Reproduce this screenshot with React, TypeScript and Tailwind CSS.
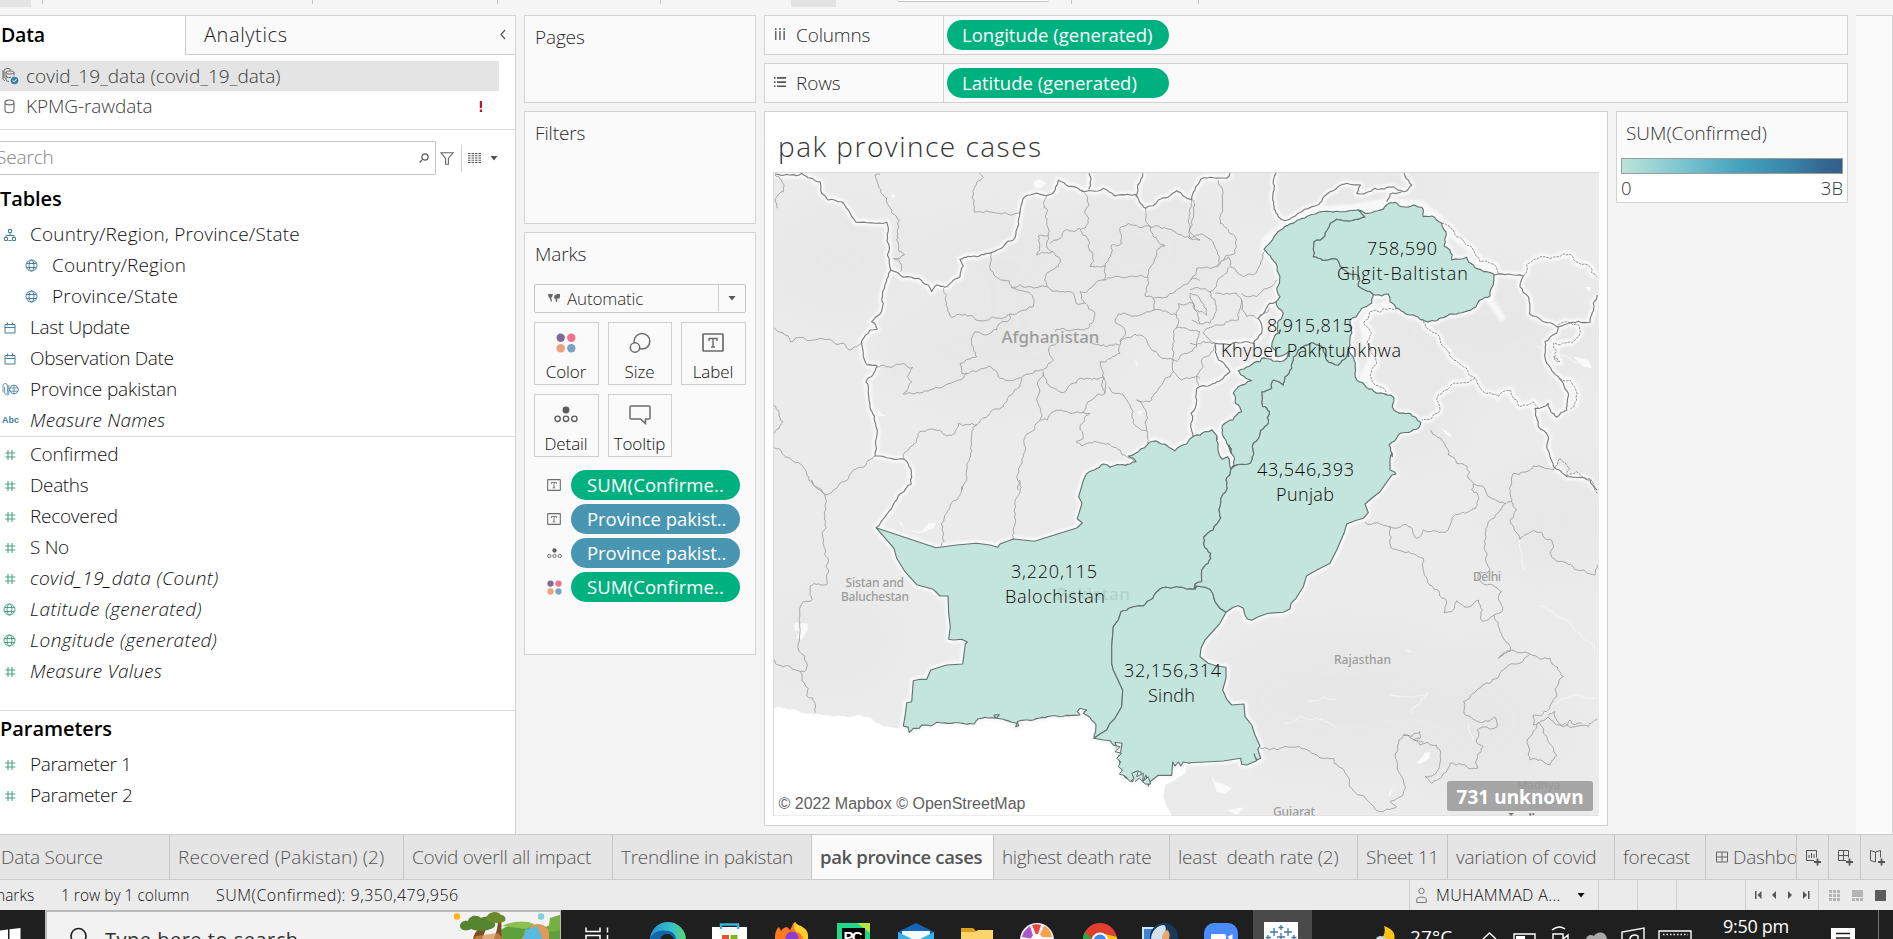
import React from "react";

/* ------------------------------------------------------------------ */
/* Map geometry                                                        */
/* ------------------------------------------------------------------ */

type Pt = [number, number];
type Origin = [number, number];

// Survey sheets: each list of points is stored in thirds of a pixel, relative to its sheet.
const A: Origin = [770, 160];
const B: Origin = [1190, 160];
const C: Origin = [770, 480];
const D: Origin = [1190, 430];

const seg = (o: Origin, s: string): Pt[] =>
  s.trim().split(/\s+/).map((p) => {
    const [x, y] = p.split(",").map(Number);
    return [o[0] + x / 3, o[1] + y / 3] as Pt;
  });

const rough = (pts: Pt[], amp = 0.16, min = 4): Pt[] => {
  let seed = Math.round(pts[0][0] * 13 + pts[0][1] * 7 + pts.length);
  const rnd = () => {
    seed = (seed * 1103515245 + 12345) & 0x7fffffff;
    return seed / 0x7fffffff - 0.5;
  };
  const out: Pt[] = [pts[0]];
  const split = (a: Pt, b: Pt) => {
    const dx = b[0] - a[0];
    const dy = b[1] - a[1];
    const len = Math.hypot(dx, dy);
    if (len < min) {
      out.push(b);
      return;
    }
    const k = rnd() * amp * 2 * Math.min(1, 14 / len);
    const m: Pt = [(a[0] + b[0]) / 2 - dy * k, (a[1] + b[1]) / 2 + dx * k];
    split(a, m);
    split(m, b);
  };
  for (let i = 1; i < pts.length; i++) split(pts[i - 1], pts[i]);
  return out;
};

const path = (pts: Pt[], close = false) =>
  "M" + pts.map((p) => p[0].toFixed(1) + " " + p[1].toFixed(1)).join("L") + (close ? "Z" : "");
const rev = (p: Pt[]) => [...p].reverse();

const balNorth = [
  ...seg(C, "318,143 498,203 560,195 619,190 660,195 683,202 690,192 730,177 793,184 920,144 937,129 922,116 936,70 926,50 940,2"),
  ...rough([...seg(A, "945,950 973,930 1000,912 1020,922 1080,912 1098,905 1075,888 1105,875 1138,847 1185,852 1215,872 1250,852 1272,828 1290,826"), ...seg(B, "65,810 82,832")], 0.14),
  ...rough(seg(D, "80,22 84,60 97,88 113,80 122,118")),
];
const balPunjab = rough(seg(D, "122,118 108,150 112,175 95,200 90,230 92,265 70,300 42,320 42,345 62,370 55,400 35,420 35,455 15,462 15,478"));
const balSindh = [
  ...rough([...seg(D, "15,478"), ...seg(C, "1275,315 1270,328 1235,322 1170,327 1120,378 1053,395")], 0.12),
  ...seg(C, "1053,395 1045,420 1030,440 1025,500 1025,550 1030,570 1058,630 1055,680 1035,715 1020,730 1010,750 990,762 972,775"),
];
const balCoast = rough(seg(C, "972,775 978,735 960,712 940,700 950,690 930,685 922,695 930,705 870,710 810,714 790,720 742,725 746,737 737,740 740,730 725,727 700,718 680,715 672,706 688,704 680,715 645,712 625,716 612,732 560,728 500,727 482,738 455,735 448,745 430,745 418,757 415,742 400,738"), 0.08);
const balWest = seg(C, "400,738 405,710 410,668 425,665 430,602 450,598 470,598 482,570 530,555 578,552 586,492 592,486 575,478 550,480 536,478 541,440 536,400 534,348 510,348 490,328 440,314 405,275 380,235 372,205 318,143");
const sindhPunjab = seg(D, "15,478 20,468 45,472 60,478 68,490 75,515 90,535 108,547");
const sindhEast = seg(D, "108,547 90,580 45,630 33,655 30,680 55,700 80,708 108,712 108,745 98,780 110,808 125,825 162,822 165,860 185,885 195,915 210,948 203,958 212,985 200,990 192,972 200,992 170,1005 155,1003 152,985 100,993 0,998");
const sindhCoast = seg(C, "1258,850 1240,846 1232,858 1225,846 1215,858 1208,846 1205,886 1165,886 1140,905 1135,918 1128,885 1120,905 1112,875 1095,875 1088,905 1065,892 1056,870 1050,850 1045,830 1052,815 1056,790 1035,787 1040,800 1030,795 1020,782 1000,780 972,775");
const kpPunjab = rough([
  ...seg(B, "480,555 470,590 445,615 410,600 400,565 370,548 325,570 310,590 305,625 285,650 280,675 250,660 245,685 215,695 218,740 238,755 235,790 213,810"),
  ...seg(D, "187,50 180,100 150,103 122,118"),
]);
const kpNorth = rough(seg(B, "222,268 272,210 330,178 385,157 440,154 505,150"), 0.1);
const gbNorth = rough(seg(B, "505,150 525,160 545,158 565,152 590,135 615,127 640,140 670,135 695,142 700,170 725,168 755,190 768,215 762,258 780,270 785,300 830,292 850,315 880,335 912,343 910,375 900,408 870,420 850,445 780,462 740,482 690,478 660,465 640,455 600,425 595,402 575,408 550,403"));
const gbKp = rough(seg(B, "550,403 525,390 505,378 505,345 470,335 450,318 440,297 412,300 385,295 370,290 372,245 405,228 412,210 440,178 500,178 525,172 505,150"));
const kpEast = rough(seg(B, "550,403 545,430 515,445 500,470 480,480 485,520 480,555"));
const kpWest = rough([
  ...seg(D, "122,118 132,105 118,45"),
  ...seg(B, "125,880 110,850 97,797 155,755 130,700 145,680 185,662 145,632 210,605 215,595 270,605 290,595 295,575 262,590 245,560 265,520 262,490 280,460 258,425 270,410 260,385 270,350 258,310 222,268"),
]);
const punjabEast = [
  ...rough(seg(B, "480,555 492,600 495,640 500,660 560,700 612,715 612,750 660,760 692,787 685,805 625,825 597,855 607,890")),
  ...seg(D, "605,70 600,85 600,120 612,125 618,132 605,136 595,150 570,185 545,205 525,222 535,248 520,265 495,272 470,282 462,310 440,360 420,400 385,418 350,437 340,470 318,505 303,520 300,537 280,547 235,550 205,560 185,571 172,567 165,555 160,535 145,527 130,532 108,547"),
];

const provinces = [
  [...balNorth, ...balPunjab, ...balSindh, ...balCoast, ...balWest],
  [...rev(balSindh), ...sindhPunjab, ...sindhEast, ...sindhCoast],
  [...punjabEast, ...rev(sindhPunjab), ...rev(balPunjab), ...rev(kpPunjab)],
  [...kpNorth, ...rev(gbKp), ...kpEast, ...kpPunjab, ...kpWest],
  [...gbNorth, ...gbKp],
].map((p) => path(p, true));

const deltaLoops = path(seg(C, "1030,795 1050,800 1035,815 1055,820 1040,835 1052,845 1045,860 1058,870 1048,882 1066,888 1080,905 1092,895 1085,880 1105,872 1100,890 1120,880 1118,905 1135,890 1142,912 1125,912 1108,895 1095,905"));

const countryLines: Pt[][] = [
  seg(A, "15,42 60,45 95,40 150,65 155,100 175,120 215,125 235,150 258,187 350,187 358,260 352,285 362,330"),
  seg(A, "362,330 400,352 445,355 475,375 485,395 500,375 525,382 570,350 580,318 570,298 620,290 680,270 730,240 742,205 750,155 758,118 790,102 845,102 865,60 930,90 1000,85 1035,108 1095,103 1127,145 1165,120 1220,92 1265,120 1275,90 1292,58 1370,55 1380,40"),
  seg(A, "957,40 957,88"),
  seg(A, "1118,40 1103,75 1100,110"),
  [...seg(A, "362,330 345,375 340,430 330,462 305,485 322,508 300,510 275,543 280,580 292,615 322,618 288,665 300,740 318,800 315,888 408,902 422,925 425,950"), ...seg(C, "424,12 318,143")],
  [...seg(D, "82,30 80,22"), ...seg(B, "65,810 30,826 8,830 2,800 3,760 20,720 20,685 75,670 120,635 85,600 75,550 120,555 190,550 215,520 205,475 240,430 258,425")],
  seg(B, "258,38 248,120 265,170 285,182 310,170 335,155 375,138 395,125 420,95 470,70 512,75 500,100 555,85 610,80 640,95 665,75 655,60 642,40"),
  seg(B, "635,95 600,102 590,125"),
  seg(B, "912,345 1000,348 990,380 1015,410 1018,460 1060,485 1100,500 1130,492 1200,487 1210,430 1222,405"),
  [...seg(B, "1105,500 1100,520 1065,545 1070,610 1105,650 1120,670 1135,700 1130,750 1100,772 1082,755 1075,730 1035,745 1045,800 1075,830"), ...seg(D, "1070,50 1080,80 1090,110 1130,140 1200,150 1222,180")],
].map((l) => rough(l, 0.14));

const softHalo: Pt[][] = [
  seg(B, "600,430 540,450 520,490 530,560 545,600 520,650 560,690"),
  seg(B, "755,190 800,235 850,275 870,310 915,330"),
  seg(B, "222,268 225,240 272,205 330,170 385,150 500,142 590,125 695,132 755,180"),
  seg(B, "940,480 900,420 915,350"),
];

const dashedLines: Pt[][] = [
  seg(B, "755,190 800,230 850,270 870,305 920,325 928,345"),
  seg(B, "1000,348 1010,315 1060,290 1140,283 1200,320 1220,350"),
  seg(B, "1105,495 1165,495 1170,520 1145,548 1090,550 1095,600 1110,605 1090,590"),
  seg(B, "1110,655 1140,660 1160,720 1140,750"),
  seg(B, "640,455 600,445 540,455 520,490 545,520 530,550 560,610 545,660 585,690 588,715"),
  seg(B, "690,478 750,540 770,570 790,600 820,620 855,655 890,700 925,710 960,690 990,740 1030,725 1045,745"),
  seg(B, "855,655 800,670 745,705 750,750 725,775 695,780"),
  seg(D, "1090,120 1110,85 1140,115 1130,140 1160,125 1200,145 1222,190"),
].map((l) => rough(l, 0.2));

const districtLines: Pt[][] = [
  seg(A, "15,45 35,60 40,95 15,120 22,145"),
  seg(A, "330,42 315,45 325,75 388,180 388,275 403,285 390,295 370,295 395,315 392,335"),
  seg(A, "628,40 640,52 613,85 613,157 752,157"),
  seg(A, "10,500 60,545 100,532 220,550 240,570 275,543"),
  seg(A, "10,735 38,785 10,822"),
  seg(A, "10,860 110,940 165,1003"),
  [...seg(A, "315,888 250,930 220,965 190,990"), ...seg(C, "165,43")],
  [...seg(C, "125,0 163,43 162,200 175,240 172,312 120,318 127,358 100,365 88,485 108,545 108,570 90,575 10,538")],
  seg(C, "90,575 115,625 110,645 136,675 136,698"),
  seg(A, "668,275 660,315 672,345 718,362 725,383 780,400 790,440 770,450 720,462 650,480 610,470 545,472 530,430 520,385"),
  seg(A, "725,383 830,380 910,400 918,430 945,428 975,460 955,505 858,508 856,515"),
  seg(A, "830,380 830,340 865,320 870,295 848,275 800,285 805,228 835,225 830,260 848,275"),
  seg(A, "835,225 833,150 820,130 828,105"),
  seg(A, "935,88 952,110 945,160 955,190 930,210 955,240 968,280 960,320 1005,318"),
  seg(A, "930,205 880,215 840,250"),
  seg(A, "1127,145 1140,200 1075,190 1050,205 1055,250 1025,255 1005,318 1000,360 930,395 945,430"),
  seg(A, "1140,200 1185,258 1160,280 1135,330 1130,380 1125,408"),
  seg(A, "1000,360 1070,352 1133,352"),
  seg(A, "1140,200 1215,215 1290,240"),
  seg(A, "1272,120 1258,210 1290,240"),
  seg(A, "1125,408 1150,415 1200,400 1265,355 1290,362"),
  seg(A, "1150,415 1152,450 1110,465 1045,462 1038,490 1065,510 1050,555 1000,555 960,548"),
  seg(A, "1152,450 1220,465 1218,505 1210,600 1170,590 1140,560 1110,525 1050,545"),
  seg(A, "1220,465 1225,430 1270,430 1290,490"),
  seg(A, "1218,505 1290,515 1280,560 1220,605 1210,600"),
  seg(A, "720,462 718,480 690,490 680,510 660,520 615,515 605,545 620,590 570,610 575,640 590,640"),
  seg(A, "590,640 660,618 690,655 730,662 820,630 850,600 835,570 860,550"),
  seg(A, "590,640 565,660 520,680 430,702 400,702 425,665 412,650 428,622 322,622"),
  seg(A, "820,635 805,680 810,780 765,830 755,900 745,990"),
  seg(C, "748,0 730,177"),
  seg(A, "755,655 750,680 725,705 700,740 620,795 565,790 555,820 530,828 500,810 445,820 430,855 402,880 402,898"),
  [...seg(A, "620,795 603,840 590,930 575,990"), ...seg(C, "575,20 560,60 530,100 515,130 512,200")],
  seg(A, "820,640 830,670 880,698 930,655 1000,650 1005,700 965,720 935,758 850,755 832,780 812,782"),
  seg(A, "1005,700 1000,690 990,605 1050,580 1050,558"),
  seg(A, "1015,682 1060,705 1090,755 1100,800 1130,812"),
  seg(A, "935,758 960,760 930,800 940,830 918,845 935,858 1000,850 1050,870 1095,905"),
  seg(A, "1100,720 1130,760 1130,812 1130,850"),
  seg(A, "1100,720 1140,725 1170,680 1210,635 1210,600"),
  seg(A, "1210,635 1235,660 1290,655"),
  seg(B, "85,60 98,120 90,190 140,240 135,280 100,300"),
  seg(B, "8,118 0,160 5,235 50,230 80,270 80,320 20,325 0,360"),
  seg(B, "80,320 115,290 120,320 160,350 190,345 215,300 225,272"),
  seg(B, "115,322 80,370 60,395 0,390"),
  seg(B, "60,395 75,420 75,460 60,490 5,480"),
  seg(B, "75,400 110,400 140,400 155,420 145,480 75,495 40,520 75,550"),
  seg(B, "155,400 200,410 250,375 262,360"),
  seg(B, "155,420 170,470 205,475 240,445"),
  seg(B, "0,400 40,430 50,465 20,450 0,400"),
  seg(B, "75,555 35,600 40,620 20,650 25,680"),
  seg(B, "0,550 40,545 75,550"),
  seg(D, "720,0 752,25 775,75 800,100 830,108 835,145 880,170 895,200 930,218 965,215 960,190 970,130 1030,108 1090,120"),
  seg(D, "945,220 895,275 888,320 900,420 890,430 870,425 862,445 890,465 935,485 938,540 912,555 875,572 865,510 840,530 800,512 785,545 762,548 770,515"),
  seg(D, "770,515 712,450 700,385 640,365 605,355 600,290 525,277"),
  seg(D, "600,290 650,285 680,325 700,300 775,300 790,260 825,250 862,225 862,190 845,180 850,160"),
  seg(D, "965,215 980,240 960,270 990,328 1030,302 1090,345 1080,370 1150,410 1215,435 1222,405"),
  seg(D, "910,555 925,590 955,640 960,665 925,685 955,665 1020,672"),
  seg(D, "1020,672 940,720 850,790 820,815 822,850 850,868 900,872 915,860 922,890 862,900 858,930 880,950 862,985 862,1015 780,1000 760,1030 725,1060 705,1040 740,1025 750,960 740,945 690,945 640,915 620,990 640,1050 640,1090 600,1115 620,1130 575,1145"),
  seg(D, "575,1145 530,1110 480,1070 465,1030 430,985 380,975 320,950 210,955"),
  seg(D, "640,915 665,920 690,905 690,925 670,930 700,935"),
  seg(D, "1020,672 1080,685 1120,740 1100,800 1075,840 1030,855 1030,885 1045,878 1012,930 1020,990 1080,1005 1100,975 1070,920 1045,878 1075,860 1100,885 1150,890 1195,890 1222,868"),
  seg(D, "1075,855 1095,845 1100,870 1120,890 1140,870 1155,885 1175,880"),
].map((l) => rough(l, 0.2, 3));

const ocean = path([
  ...rough(seg(C, "0,685 60,688 120,700 200,708 260,705 300,712 360,742 385,747 400,738"), 0.15),
  ...seg(C, "460,700 700,680 980,700 1100,780 1205,846 1250,856 1245,880 1205,905 1185,915 1180,950 1190,980 1210,1012 0,1012"),
], true);

const lakes = [
  path(seg(A, "790,65 805,58 830,70 815,82 795,85"), true),
  path(seg(A, "358,108 375,100 372,115"), true),
  path(seg(A, "322,742 332,760 348,768 325,768"), true),
  path(seg(A, "1095,598 1103,610 1100,622"), true),
  path(seg(A, "1102,755 1118,750 1110,765"), true),
  path(seg(C, "75,428 115,432 112,450 95,480 78,475 88,455 72,450"), true),
  path(seg(C, "385,122 398,130 400,150 450,160 490,145 498,128 475,130 455,155 405,150"), true),
  path(seg(D, "62,1030 75,1055 95,1060 125,1075 105,1092 80,1085"), true),
  path(seg(D, "680,1000 705,970 720,965 718,985 690,1002"), true),
  path(seg(D, "110,1140 165,1132 140,1155"), true),
  path(seg(D, "640,658 660,662 665,670"), true),
  path(seg(D, "595,1095 610,1072 600,1098"), true),
  path(seg(B, "1150,590 1195,600 1205,625 1180,620"), true),
  path(seg(B, "1185,380 1205,382 1195,395"), true),
  path(seg(B, "755,805 780,820 785,832 765,822"), true),
];

const rivers = [
  path(rough(seg(D, "1050,528 1090,545 1140,580 1180,625 1205,640 1215,660"))),
  path(rough(seg(D, "990,330 998,370 1003,420"))),
  path(rough(seg(D, "285,880 330,858 380,865 440,895"))),
  path(rough(seg(D, "355,812 400,800 440,808"))),
  path(rough(seg(D, "600,795 635,800 690,795 715,790 690,820 665,850"))),
  path(rough(seg(D, "1222,800 1150,795 1110,810 1090,830 1060,850"))),
  path(rough(seg(D, "835,880 835,900 850,930"))),
  path(rough(seg(B, "1040,560 1080,585 1130,590 1190,620"))),
];

const shades: [number, number, number, number][] = [
  [840, 260, 70, 50], [1010, 260, 90, 45], [1140, 250, 80, 60], [1000, 350, 120, 50], [1330, 180, 110, 30],
  [1480, 330, 120, 60], [1400, 420, 60, 40], [1550, 520, 60, 50], [1340, 700, 130, 70], [1480, 720, 80, 70], [830, 640, 60, 40],
];

interface MapTextProps { x: number; y: number; w: number; size: number; cls: string; children: string }
const MapText = ({ x, y, w, size, cls, children }: MapTextProps) => (
  <text x={x} y={y} textLength={w} fontSize={size} className={cls}>{children}</text>
);

const PLACE = "font-['Noto_Sans',sans-serif] font-medium fill-[#9c9c9c]";
const MARK = "font-['Open_Sans',sans-serif] font-[350] fill-[#0a0a0a]";

const ProvinceMap = () => (
  <svg viewBox="773 172 826 644" width="826" height="644" className="block bg-[#ebebeb]">
    <defs>
      <filter id="soft" x="-30%" y="-30%" width="160%" height="160%"><feGaussianBlur stdDeviation="18" /></filter>
      <filter id="glow" x="-10%" y="-10%" width="120%" height="120%"><feGaussianBlur stdDeviation="0.9" /></filter>
    </defs>
    <g filter="url(#soft)" fill="#dfdfdf" opacity="0.28">
      {shades.map(([cx, cy, rx, ry]) => <ellipse key={cx + "-" + cy} cx={cx} cy={cy} rx={rx} ry={ry} />)}
    </g>
    <path d={ocean} fill="#fff" />
    <g fill="#fafafa">{lakes.map((d) => <path key={d} d={d} />)}</g>
    <g fill="none" stroke="#f7f7f7" strokeWidth="1">{rivers.map((d) => <path key={d} d={d} />)}</g>
    <g fill="none" stroke="#f8f8f8" strokeWidth="7" strokeLinejoin="round" filter="url(#glow)">
      {[...countryLines, ...softHalo, ...dashedLines.slice(0, 7)].map((l, i) => <path key={i} d={path(l)} />)}
      {provinces.map((d) => <path key={d} d={d} strokeWidth="7" />)}
    </g>
    <g fill="none" stroke="#969696" strokeWidth="0.8" strokeLinejoin="round">
      {districtLines.map((l, i) => <path key={i} d={path(l)} />)}
    </g>
    <g fill="none" stroke="#7d7d7d" strokeWidth="1.15" strokeLinejoin="round">
      {countryLines.map((l, i) => <path key={i} d={path(l)} />)}
    </g>
    <g fill="none" stroke="#858585" strokeWidth="0.9" strokeDasharray="2.5 1">
      {dashedLines.map((l, i) => <path key={i} d={path(l)} />)}
    </g>
    <g fill="#c3e5db" stroke="#64736f" strokeWidth="1.15" strokeLinejoin="round">
      {provinces.map((d) => <path key={d} d={d} />)}
      <path d={deltaLoops} strokeWidth="1" />
    </g>

    <MapText x={1001.5} y={343} w={98} size={17} cls={PLACE}>Afghanistan</MapText>
    <MapText x={845.5} y={586.5} w={58.5} size={12} cls={PLACE}>Sistan and</MapText>
    <MapText x={841} y={601} w={68} size={12} cls={PLACE}>Baluchestan</MapText>
    <MapText x={1334} y={663.5} w={57} size={12} cls={PLACE}>Rajasthan</MapText>
    <MapText x={1473} y={580.5} w={28} size={12} cls={PLACE}>Delhi</MapText>
    <MapText x={1273} y={816} w={42} size={12} cls={PLACE}>Gujarat</MapText>
    <MapText x={1517} y={788.5} w={43} size={11.5} cls={PLACE}>Madhya</MapText>
    <MapText x={1508} y={825} w={36} size={17} cls="font-['Noto_Sans',sans-serif] font-medium fill-[#777]">India</MapText>
    <MapText x={1056} y={600} w={74} size={17} cls="font-['Noto_Sans',sans-serif] font-medium fill-[#b2d2c9]">Pakistan</MapText>

    <MapText x={1367} y={255} w={70} size={18} cls={MARK}>758,590</MapText>
    <MapText x={1337} y={280} w={131} size={18} cls={MARK}>Gilgit-Baltistan</MapText>
    <MapText x={1267} y={332} w={86} size={18} cls={MARK}>8,915,815</MapText>
    <MapText x={1221} y={357} w={180} size={18} cls={MARK}>Khyber Pakhtunkhwa</MapText>
    <MapText x={1257} y={476} w={97} size={18} cls={MARK}>43,546,393</MapText>
    <MapText x={1276} y={501} w={58} size={18} cls={MARK}>Punjab</MapText>
    <MapText x={1011} y={578} w={86} size={18} cls={MARK}>3,220,115</MapText>
    <MapText x={1005} y={603} w={100} size={18} cls={MARK}>Balochistan</MapText>
    <MapText x={1124} y={677} w={97} size={18} cls={MARK}>32,156,314</MapText>
    <MapText x={1148} y={702} w={47} size={18} cls={MARK}>Sindh</MapText>

    <rect x="775" y="793" width="254" height="23" fill="#fff" opacity="0.6" />
    <MapText x={778.5} y={808.5} w={247} size={16} cls="font-['Liberation_Sans',sans-serif] font-normal fill-[#606060]">© 2022 Mapbox © OpenStreetMap</MapText>
    <rect x="1447" y="781" width="146" height="30" rx="2.5" fill="#999" opacity="0.85" />
    <MapText x={1456.5} y={804} w={127} size={19} cls="font-['Noto_Sans',sans-serif] font-bold fill-white">731 unknown</MapText>
    <path d="M773 172.5H1599M773.5 172V816H1599" fill="none" stroke="#d9d9d9" />
  </svg>
);

/* ------------------------------------------------------------------ */
/* Small icons                                                         */
/* ------------------------------------------------------------------ */

const GREEN = "#4aa287";
const BLUE = "#44809c";

const Hash = () => (
  <svg width="12" height="12" viewBox="0 0 12 12" className="ml-[4px]" stroke={GREEN} strokeWidth="1.1"><path d="M3.7 1v10M7.7 1v10M1 4h10M1 8h10" transform="translate(.3 0)" /></svg>
);
const Globe = ({ c, sub }: { c: string; sub?: boolean }) => (
  <svg width="13" height="13" viewBox="0 0 13 13" className={sub ? "ml-[2px]" : "ml-[3px]"} fill="none" stroke={c} strokeWidth="1"><circle cx="6.5" cy="6.5" r="5.5" /><ellipse cx="6.5" cy="6.5" rx="2.4" ry="5.5" /><path d="M1.5 4.5h10M1.5 8.5h10" /></svg>
);
const Cal = () => (
  <svg width="12" height="12" viewBox="0 0 12 12" className="ml-[4px]" fill="none" stroke={BLUE} strokeWidth="1"><path d="M1 2.5h10v8.500H1zM1 5.500h10M3.500 .5v3M8.500 .5v3" /></svg>
);
const Hier = () => (
  <svg width="12" height="12" viewBox="0 0 12 12" className="ml-[4px]" fill="none" stroke={BLUE} strokeWidth="1"><path d="M4.500 .5h3v3h-3zM.5 8.500h3v3h-3zM8.500 8.500h3v3h-3zM6 3.500v3M2 8.500v-2h8v2M4.500 11.500h3" /></svg>
);
const Clip = () => (
  <svg width="17" height="13" viewBox="0 0 17 13" className="ml-[1.5px]" fill="none" stroke={BLUE} strokeWidth="1"><path d="M1 9.500V2.800a2.300 2.300 0 0 1 4.600 0v7a1.500 1.500 0 0 1-3 0V4M6.800 2v9a1.300 1.300 0 0 1-2 1" strokeWidth=".8" /><circle cx="12" cy="6.500" r="4.300" /><path d="M8 5h8M8 8.200h8M12 2.200v8.600" strokeWidth=".8" /></svg>
);
const Abc = () => <span className="ml-[2px] font-['Liberation_Sans',sans-serif] text-[9px] font-bold text-[#44809c]">Abc</span>;

const Dots = ({ s }: { s: number }) => (
  <svg width={s} height={s} viewBox="0 0 20 20"><circle cx="4.700" cy="4.700" r="4.200" fill="#7e6a95" /><circle cx="15.300" cy="4.700" r="4.200" fill="#f3708a" /><circle cx="4.700" cy="15.300" r="4.200" fill="#efa07c" /><circle cx="15.300" cy="15.300" r="4.200" fill="#7ba3c6" /></svg>
);
const SizeIcon = () => (
  <svg width="22" height="22" viewBox="0 0 22 22" stroke="#6b6b6b" strokeWidth="1.5"><circle cx="13" cy="9.200" r="7.800" fill="none" /><circle cx="6" cy="15.500" r="4.700" fill="#fafafa" /></svg>
);
const LabelIcon = ({ w, h }: { w: number; h: number }) => (
  <svg width={w} height={h} viewBox="0 0 22 19" fill="none" stroke="#6b6b6b" strokeWidth="1.700"><rect x="1" y="1" width="20" height="17" rx=".6" /><path d="M7 8V5.500h8V8M11 5.500V14M9 14h4" strokeWidth="1.400" /></svg>
);
const DetailIcon = ({ w }: { w: number }) => (
  <svg width={w} height={w * 0.7} viewBox="0 0 24 17"><circle cx="12" cy="4" r="3.500" fill="#5c5c5c" /><g fill="none" stroke="#5c5c5c" strokeWidth="1.400"><circle cx="3.500" cy="13" r="2.700" /><circle cx="12" cy="13" r="2.700" /><circle cx="20.500" cy="13" r="2.700" /></g></svg>
);
const TooltipIcon = () => (
  <svg width="22" height="20" viewBox="0 0 22 20" fill="none" stroke="#6b6b6b" strokeWidth="1.500"><path d="M2 1h18a1 1 0 0 1 1 1v11a1 1 0 0 1-1 1h-3.500v4.500L11.500 14H2a1 1 0 0 1-1-1V2a1 1 0 0 1 1-1z" /></svg>
);
const Caret = ({ c = "#555" }: { c?: string }) => <svg width="8" height="5" viewBox="0 0 8 5"><path d="M.5 0h7L4 4.500z" fill={c} /></svg>;

/* ------------------------------------------------------------------ */
/* Data pane                                                           */
/* ------------------------------------------------------------------ */

interface FieldProps { icon: React.ReactNode; label: string; italic?: boolean; sub?: boolean; track: string }
const Field = ({ icon, label, italic, sub, track }: FieldProps) => (
  <div className={"flex h-[31px] items-center " + (sub ? "pl-[23px]" : "")}>
    <span className={"flex shrink-0 items-center " + (sub ? "w-[29px]" : "w-[30px]")}>{icon}</span>
    <span className={"whitespace-nowrap text-[#111] " + track + (italic ? " italic" : "")}>{label}</span>
  </div>
);

const DataPane = () => (
  <section className="flex w-[516px] shrink-0 flex-col border-t border-r border-[#d2d2d2] bg-white">
    <div className="flex h-[39px]">
      <div className="flex w-[185px] items-center pb-[2px] pl-px text-[19.500px] font-semibold tracking-[-0.2px] text-black">Data</div>
      <div className="flex flex-1 items-center justify-between border-b border-l border-[#cdcdcd] bg-[#fafafa] pr-[9px] pb-px pl-[18px] text-[20px] tracking-[0.6px] text-[#222]">
        <span className="-mt-px">Analytics</span>
        <svg width="6" height="11" viewBox="0 0 6 11" fill="none" stroke="#555" strokeWidth="1.200"><path d="M5 1 1 5.500 5 10" /></svg>
      </div>
    </div>
    <div className="mt-[6px] mr-4 flex h-[30px] items-center rounded-r-[1px] bg-[#e4e4e4] pl-[2px] text-[#3c3c3c]">
      <svg width="17" height="17" viewBox="0 0 17 17" fill="none" stroke="#666" strokeWidth="1" className="mr-[7px]"><path d="M2 10V2c2-2 6-2 7 0M1 2.500v8c0 1 1 2 2 2M4 4.500c0-2 8-2 8 0s-8 2-8 0v7c0 1 1 2 3 2M12 4.500v3M4 8c1 2 4 2 5 1" /><circle cx="12.500" cy="12.500" r="3.800" fill="#3d80a8" stroke="none" /><path d="m10.800 12.500 1.300 1.300 2.200-2.500" stroke="#fff" /></svg>
      <span>covid_19_data (covid_19_data)</span>
    </div>
    <div className="flex h-[30px] items-center pr-[32px] pl-[4px] text-[#3c3c3c]">
      <svg width="11" height="15" viewBox="0 0 11 15" fill="none" stroke="#666" strokeWidth="1.100" className="mr-[11px]"><path d="M1 3.500C1 .2 10 .2 10 3.500S1 6.500 1 3.500v8c0 3 9 3 9 0v-8" /></svg>
      <span className="flex-1 tracking-[-0.08px]">KPMG-rawdata</span>
      <svg width="4" height="11" viewBox="0 0 4 11" fill="#b81c2c"><path d="M.8 0h2.200v7H.8zM.8 8.500h2.200V11H.8z" /></svg>
    </div>
    <div className="mt-2 h-px bg-[#dcdcdc]" />
    <div className="mt-[11px] flex h-[34px] items-center">
      <div className="flex h-[34px] w-[436px] items-center justify-between rounded-r-[2px] border border-l-0 border-[#c3c3c3] pr-[6px] pb-px text-[#858585]">
        <span className="-ml-[4px] tracking-[-0.15px]">Search</span>
        <svg width="10" height="10" viewBox="0 0 10 10" fill="none" stroke="#555" strokeWidth="1.200"><circle cx="6" cy="4" r="3.100" /><path d="M3.800 6.200.6 9.500" /></svg>
      </div>
      <svg width="14" height="13" viewBox="0 0 14 13" fill="none" stroke="#666" strokeWidth="1.100" className="ml-[4px]"><path d="M.8.7h12.400L8.400 6.500v5.700H5.600V6.500z" /></svg>
      <div className="ml-[7px] h-[27px] w-px bg-[#cfcfcf]" />
      <svg width="13" height="10" viewBox="0 0 13 10" stroke="#555" strokeWidth="1" strokeDasharray="2.500 1" className="ml-[6px]"><path d="M0 .5h13M0 2.750h13M0 5h13M0 7.250h13M0 9.500h13" /></svg>
      <span className="ml-[9px]"><Caret /></span>
    </div>
    <div className="mt-[8px] mb-[5px] flex h-[31px] items-center text-[20px] font-semibold tracking-[-0.1px] text-black">Tables</div>
    <Field icon={<Hier />} label="Country/Region, Province/State" track="tracking-[0.16px]" />
    <Field icon={<Globe c={BLUE} sub />} label="Country/Region" sub track="tracking-[0.1px]" />
    <Field icon={<Globe c={BLUE} sub />} label="Province/State" sub track="tracking-[0.2px]" />
    <Field icon={<Cal />} label="Last Update" track="tracking-[-0.3px]" />
    <Field icon={<Cal />} label="Observation Date" track="tracking-[-0.38px]" />
    <Field icon={<Clip />} label="Province pakistan" track="tracking-[-0.15px]" />
    <Field icon={<Abc />} label="Measure Names" italic track="tracking-[0.17px]" />
    <div className="mb-[2px] h-px bg-[#dcdcdc]" />
    <Field icon={<Hash />} label="Confirmed" track="tracking-[-0.2px]" />
    <Field icon={<Hash />} label="Deaths" track="tracking-[-0.35px]" />
    <Field icon={<Hash />} label="Recovered" track="tracking-[-0.28px]" />
    <Field icon={<Hash />} label="S No" track="tracking-[-0.3px]" />
    <Field icon={<Hash />} label="covid_19_data (Count)" italic track="tracking-[0.4px]" />
    <Field icon={<Globe c={GREEN} />} label="Latitude (generated)" italic track="tracking-[0.33px]" />
    <Field icon={<Globe c={GREEN} />} label="Longitude (generated)" italic track="tracking-[0.35px]" />
    <Field icon={<Hash />} label="Measure Values" italic track="tracking-[0.2px]" />
    <div className="mt-[23px] h-px bg-[#dcdcdc]" />
    <div className="mt-[2px] mb-[5px] flex h-[31px] items-center text-[20px] font-semibold tracking-[-0.05px] text-black">Parameters</div>
    <Field icon={<Hash />} label="Parameter 1" track="tracking-[-0.4px]" />
    <Field icon={<Hash />} label="Parameter 2" track="tracking-[-0.3px]" />
  </section>
);

/* ------------------------------------------------------------------ */
/* Cards                                                               */
/* ------------------------------------------------------------------ */

const CARD = "border border-[#d2d2d2] bg-[#fafafa]";

const MarkButton = ({ icon, label }: { icon: React.ReactNode; label: string }) => (
  <div className="flex h-[63px] flex-col items-center border border-[#d0d0d0] pr-px">
    <div className="flex h-[39px] items-center">{icon}</div>
    <span className="text-[17px] leading-[20px] tracking-[-0.1px] text-[#111]">{label}</span>
  </div>
);

const MarkPill = ({ icon, label, cls }: { icon: React.ReactNode; label: string; cls: string }) => (
  <div className="flex h-[30px] items-center">
    <span className="flex w-[24px]">{icon}</span>
    <span className={"flex h-[30px] w-[169px] items-center overflow-hidden rounded-full pb-px pl-4 font-normal whitespace-nowrap text-white " + cls}>{label}</span>
  </div>
);

const CardColumn = () => (
  <section className="ml-2 flex w-[232px] shrink-0 flex-col gap-2 tracking-[-0.15px]">
    <div className={CARD + " h-[88px] pt-[8px] pl-[10px] text-[#2b2b2b]"}>Pages</div>
    <div className={CARD + " h-[113px] pt-[8px] pl-[10px] text-[#2b2b2b]"}>Filters</div>
    <div className={CARD + " h-[423px] pt-[8px] pr-[9px] pl-[9px] text-[#2b2b2b]"}>
      <div className="pl-px">Marks</div>
      <div className="mt-[16px] flex h-[29px] items-center rounded-[2px] border border-[#c6c6c6] pb-px text-[17px]">
        <svg width="12" height="9" viewBox="0 0 12 9" fill="#666" className="ml-[13px]"><path d="M0 0h5L4 3 3 4l1 2-1 2.500L2.200 5 .5 2.500zM6.500 1.500 9 0h3v3l-1 2-1.500-1L9 8 8 8 7.500 5 6 4z" /></svg>
        <span className="ml-[7px] flex-1">Automatic</span>
        <div className="flex h-full w-[27px] items-center justify-center border-l border-[#d0d0d0]"><Caret /></div>
      </div>
      <div className="mt-[9px] grid grid-cols-[65px_64px_65px] gap-x-[9px] gap-y-[9px]">
        <MarkButton icon={<Dots s={20} />} label="Color" />
        <MarkButton icon={<SizeIcon />} label="Size" />
        <MarkButton icon={<LabelIcon w={22} h={19} />} label="Label" />
        <MarkButton icon={<DetailIcon w={24} />} label="Detail" />
        <MarkButton icon={<TooltipIcon />} label="Tooltip" />
      </div>
      <div className="mt-[13px] ml-[13px] flex flex-col gap-1">
        <MarkPill icon={<LabelIcon w={14} h={12} />} label="SUM(Confirme.." cls="bg-[#00b180] text-[18.500px] tracking-[0.1px]" />
        <MarkPill icon={<LabelIcon w={14} h={12} />} label="Province pakist.." cls="bg-[#4996b2] text-[18.500px] tracking-[-0.05px]" />
        <MarkPill icon={<DetailIcon w={15} />} label="Province pakist.." cls="bg-[#4996b2] text-[18.500px] tracking-[-0.05px]" />
        <MarkPill icon={<Dots s={15} />} label="SUM(Confirme.." cls="bg-[#00b180] text-[18.500px] tracking-[0.1px]" />
      </div>
    </div>
  </section>
);

const Shelf = ({ icon, name, pill }: { icon: React.ReactNode; name: string; pill: string }) => (
  <div className={CARD + " flex h-[40px]"}>
    <div className="flex w-[179px] items-center border-r border-[#d2d2d2] pl-[9px] tracking-[-0.15px] text-[#2b2b2b]">
      <span className="w-[22px] pb-[2px]">{icon}</span>{name}
    </div>
    <div className="ml-[3px] flex h-[30px] w-[222px] items-center self-center rounded-full bg-[#00b180] pb-[2px] pl-[15px] text-[18.500px] font-normal whitespace-nowrap text-white">{pill}</div>
  </div>
);

const Workspace = () => (
  <section className="ml-2 flex w-[1084px] shrink-0 flex-col gap-2">
    <Shelf
      icon={<svg width="12" height="12" viewBox="0 0 12 12" fill="#666"><path d="M1 0h1.500v2H1zM5.200 0h1.500v2H5.200zM9.400 0h1.500v2H9.400zM1 3h1.500v9H1zM5.200 3h1.500v9H5.200zM9.400 3h1.500v9H9.400z" /></svg>}
      name="Columns"
      pill="Longitude (generated)"
    />
    <Shelf
      icon={<svg width="12" height="12" viewBox="0 0 12 12" fill="#555"><path d="M0 1h1.500v1.700H0zM0 5.200h1.500v1.700H0zM0 9.400h1.500v1.700H0zM3 1h9v1.700H3zM3 5.200h9v1.700H3zM3 9.400h9v1.700H3z" /></svg>}
      name="Rows"
      pill="Latitude (generated)"
    />
    <div className="flex items-start gap-2">
      <div className="h-[715px] w-[844px] border border-[#d2d2d2] bg-white pl-2">
        <h1 className="flex h-[60px] items-center pt-[8px] pl-[5px] text-[28px] font-light tracking-[1.5px] text-[#333]">pak province cases</h1>
        <ProvinceMap />
      </div>
      <div className="h-[92px] w-[232px] border border-[#d2d2d2] bg-white">
        <div className="flex h-[42px] items-center bg-[#fafafa] pl-[9px] text-[#333]">SUM(Confirmed)</div>
        <div className="mx-[4px] mt-[4px] h-[16px] border border-[#9c9c9c] bg-[linear-gradient(90deg,#bce4d8_0%,#7ac4cf_28%,#45a3bd_53%,#3a87ab_75%,#34648f_93%,#345f8c_100%)]" />
        <div className="flex justify-between px-[4px] text-[18.500px] leading-[28px] text-[#333]"><span>0</span><span>3B</span></div>
      </div>
    </div>
  </section>
);

/* ------------------------------------------------------------------ */
/* Bottom bars                                                         */
/* ------------------------------------------------------------------ */

const TAB = "flex h-full shrink-0 items-center overflow-hidden border-r border-[#c6c6c6] whitespace-pre";
const PLUS = "M9 14h7M12.500 10.500v7";

const SheetTabs = () => (
  <nav className="flex h-[46px] border-t border-b border-[#cbcbcb] bg-[#e5e5e5] text-[19px] tracking-[-0.25px] text-[#555]">
    <div className={TAB + " w-[170px] pl-px"}>Data Source</div>
    <div className={TAB + " w-[234px] pl-2 tracking-[0.15px]"}>Recovered (Pakistan) (2)</div>
    <div className={TAB + " w-[209px] pl-2"}>Covid overll all impact</div>
    <div className={TAB + " w-[199px] pl-2"}>Trendline in pakistan</div>
    <div className={TAB + " w-[182px] bg-[#fafafa] pb-[2px] pl-2 text-[18.500px] font-semibold tracking-[-0.35px]"}>pak province cases</div>
    <div className={TAB + " w-[176px] pl-2 tracking-[-0.35px]"}>highest death rate</div>
    <div className={TAB + " w-[188px] pl-2 tracking-[-0.2px]"}>least  death rate (2)</div>
    <div className={TAB + " w-[90px] pl-2 tracking-[-0.35px]"}>Sheet 11</div>
    <div className={TAB + " w-[167px] pl-2"}>variation of covid</div>
    <div className={TAB + " w-[91px] pl-2"}>forecast</div>
    <div className={TAB + " w-[91px] pl-[10px]"}>
      <svg width="12" height="12" viewBox="0 0 12 12" fill="none" stroke="#666" className="mr-[5px] shrink-0"><path d="M.5 1h11v10H.5zM6 1v10M.5 6h11" /></svg>Dashbo
    </div>
    <div className={TAB + " w-[32px] pl-2"}><svg width="17" height="18" viewBox="0 0 17 18" fill="none" stroke="#555"><path d="M9 12.500H1.500v-10h10v7M4 10V7M6.500 10V5M9 10V6" /><path d={PLUS} strokeWidth="1.800" /></svg></div>
    <div className={TAB + " w-[32px] pl-2"}><svg width="17" height="18" viewBox="0 0 17 18" fill="none" stroke="#555"><path d="M9 12.500H1.500v-10h10v7M6.500 2.500v10M1.500 7.500h10" /><path d={PLUS} strokeWidth="1.800" /></svg></div>
    <div className={TAB + " w-[32px] border-r-0 pl-2"}><svg width="17" height="18" viewBox="0 0 17 18" fill="none" stroke="#555"><path d="M6.500 4v10L1.500 12.500v-10zM6.500 4l5-1.500v7" /><path d={PLUS} strokeWidth="1.800" /></svg></div>
  </nav>
);

const StatusBar = () => (
  <div className="flex h-[30px] bg-[#ebebeb] text-[15.500px] text-[#111]">
    <div className="flex w-[1409px] items-center whitespace-nowrap">
      <span className="-ml-[4px] w-[65px]">narks</span>
      <span className="w-[155px]">1 row by 1 column</span>
      <span className="text-[16px] tracking-[0.5px]">SUM(Confirmed): 9,350,479,956</span>
    </div>
    <div className="flex w-[190px] items-center border-x border-[#cfcfcf] pl-[6px]">
      <svg width="11" height="17" viewBox="0 0 11 17" fill="none" stroke="#777"><circle cx="5.500" cy="4" r="2.700" /><path d="M.8 15.500v-3.500c0-2.500 9.400-2.500 9.400 0v3.500z" /></svg>
      <span className="ml-[9px] flex-1 text-[16px] tracking-[0.35px]">MUHAMMAD A...</span>
      <span className="mr-[13px]"><Caret c="#111" /></span>
    </div>
    <div className="w-[39px] border-r border-[#cfcfcf]" />
    <div className="w-[39px] border-r border-[#cfcfcf]" />
    <div className="w-[69px] border-r border-[#cfcfcf]" />
    <div className="flex w-[73px] items-center border-r border-[#cfcfcf] pl-[8px]">
      <svg width="58" height="10" viewBox="0 0 58 10" fill="#555"><path d="M1 1h1.500v8H1zM7.500 1v8L3.500 5zM22 1v8l-4-4zM34 1v8l4-4zM49 1v8l4-4zM54 1h1.500v8H54z" /></svg>
    </div>
    <div className="flex flex-1 items-center gap-[12px] pl-[10px]">
      <svg width="11" height="11" viewBox="0 0 11 11" fill="#b4b4b4"><path d="M0 0h3v3H0zM4 0h3v3H4zM8 0h3v3H8zM0 4h3v3H0zM4 4h3v3H4zM8 4h3v3H8zM0 8h3v3H0zM4 8h3v3H4zM8 8h3v3H8z" /></svg>
      <svg width="11" height="11" viewBox="0 0 11 11" fill="#b4b4b4"><path d="M0 0h11v7H0zM0 8h3v3H0zM4 8h3v3H4zM8 8h3v3H8z" /></svg>
      <svg width="11" height="11" viewBox="0 0 11 11" fill="#5c5c5c"><path d="M0 0h11v11H0z" /></svg>
    </div>
  </div>
);

const Slot = ({ w, children, cls = "" }: { w: string; children?: React.ReactNode; cls?: string }) => (
  <div className={"h-[29px] shrink-0 overflow-hidden " + w + " " + cls}>{children}</div>
);

const Taskbar = () => (
  <footer className="flex h-[29px] overflow-hidden bg-[#1f1f1f] text-white">
    <Slot w="w-[45px]"><svg width="45" height="29"><path d="M0 20.500 8 19.500V29H0zM9.500 19.300 20.500 18v11h-11z" fill="#fff" /></svg></Slot>
    <div className="flex h-[29px] w-[516px] shrink-0 overflow-hidden border-t-2 border-r border-l-2 border-[#b9b9b9] bg-[#f2f2f2]">
      <svg width="58" height="27" className="shrink-0" fill="none" stroke="#222" strokeWidth="1.600"><circle cx="31.500" cy="24" r="7.500" /></svg>
      <span className="mt-[15px] w-[345px] shrink-0 text-[20px] leading-[26px] font-normal tracking-[0.5px] whitespace-nowrap text-[#333]">Type here to search</span>
      <svg width="110" height="27" viewBox="452 912 110 27" className="shrink-0">
        <circle cx="459" cy="916.500" r="3.200" fill="#fbb316" /><circle cx="543" cy="916.500" r="3.200" fill="#7fd0dd" />
        <path d="M503 930c12-9 30-8 42-2l20-8v22h-66z" fill="#5fa03c" /><path d="M504 926c10-5 24-6 32-2l-8 5z" fill="#8cc152" />
        <path d="M533 926c6-4 14-2 18 4v12h-30z" fill="#dd9a5c" /><path d="M527 930l12-4 6 14h-20z" fill="#59b9df" /><path d="M552 918l12-4v16l-14 2z" fill="#76b043" />
        <path d="M475 939c2-8 5-10 10-12l3 2-4 10zM496 939c3-8 4-14 4-19h3c1 8 0 13 1 19z" fill="#7a4d24" />
        <path d="M462 926c0-5 6-6 8-5 1-5 9-7 13-3 5-3 11 0 11 4 3-1 5 4 1 6-8 4-18 3-22 1-5 3-11 1-11-3z" fill="#56852f" />
        <path d="M489 916c3-5 12-5 14-1 5 0 6 6 2 7-5 2-12 1-15-1-3-1-3-4-1-5z" fill="#6b8a2c" />
        <path d="M478 936l22-3 8 9h-34z" fill="#d98b4f" opacity=".7" />
      </svg>
    </div>
    <Slot w="w-[89px]"><svg width="89" height="29" fill="none" stroke="#fff" strokeWidth="1.500"><path d="M25 17.500v4h14v-4M25 29v-3.500h14V29M46.500 17.500v5M46.500 25v4" /></svg></Slot>
    <Slot w="w-[62px]"><svg width="62" height="29"><defs><linearGradient id="ed"><stop offset="0" stopColor="#2390d4" /><stop offset=".6" stopColor="#35c1c9" /><stop offset="1" stopColor="#5fd66b" /></linearGradient></defs><circle cx="18" cy="30" r="18" fill="url(#ed)" /><path d="M0 30c2-8 10-11 18-9 6 1 8 5 8 9z" fill="#1464ac" /><path d="M10 31c0-4 3-7 7-7s7 3 7 7z" fill="#1f1f1f" /></svg></Slot>
    <Slot w="w-[63px]"><svg width="63" height="29"><path d="M0 17h35v12H0z" fill="#fff" /><path d="M9 19v-4.500h17V19" fill="none" stroke="#38b3de" strokeWidth="2.400" /><path d="M10 25h7v4h-7z" fill="#e8512c" /><path d="M18.500 25h7v4h-7z" fill="#7eb61c" /></svg></Slot>
    <Slot w="w-[62px]"><svg width="62" height="29"><path d="M0 29c0-6 1-10 4-12l2 4c2-3 4-4 6-4l3 3c2-2 1-5 5-8 2 4 12 6 13 17z" fill="#ff7a1c" /><path d="M20 12c-2 4-1 8 2 10 4 2 6 4 6 7h5c1-7-2-10-7-13-3-1-5-2-6-4z" fill="#ffcf2e" /><circle cx="17" cy="28" r="6.500" fill="#8a3fd1" /></svg></Slot>
    <Slot w="w-[61px]"><svg width="61" height="29"><path d="M0 13h33v16H0z" fill="#21d789" /><path d="M20 13h13v10z" fill="#b7e34a" /><path d="M5 18h23v11H5z" fill="#000" /><text x="6.500" y="32" fontSize="15" textLength="19" className="fill-white font-['Liberation_Sans',sans-serif] font-bold">PC</text></svg></Slot>
    <Slot w="w-[63px]"><svg width="63" height="29"><path d="M0 22 18 13l18 9v7H0z" fill="#1265b8" /><path d="M4 21h28v8H4z" fill="#f4fbff" /><path d="M0 22l18 9 18-9v7H0z" fill="#35b1ee" /></svg></Slot>
    <Slot w="w-[59px]"><svg width="59" height="29"><path d="M0 18h12l3 3h17v8H0z" fill="#d99f1e" /><path d="M0 22h14l3-2h15v9H0z" fill="#fbd56b" /></svg></Slot>
    <Slot w="w-[63px]"><svg width="63" height="29"><circle cx="17" cy="30" r="17" fill="#f7f2f7" /><path d="M17 27 12 15a16 16 0 0 1 9 0z" fill="#e8483b" /><path d="M19 27l5-11c5 2 7 6 8 11z" fill="#f5a24a" /><path d="M14 29 2 27c1-5 4-8 8-11z" fill="#a55ac6" /><circle cx="17" cy="30" r="6" fill="#fff" /></svg></Slot>
    <Slot w="w-[59px]"><svg width="59" height="29"><circle cx="17" cy="30" r="17" fill="#e03e2f" /><path d="M2 22l8 8H0c0-3 0-5 2-8z" fill="#2fa24c" /><path d="M34 27l-12-3 4 6h8z" fill="#fbc116" /><circle cx="17" cy="31" r="8.500" fill="#fff" /><circle cx="17" cy="31" r="6.500" fill="#4285f4" /></svg></Slot>
    <Slot w="w-[62px]"><svg width="62" height="29"><path d="M0 17h18v12H0z" fill="#cfe6fb" /><path d="M2 19h14v10H2z" fill="#3c83cf" /><circle cx="22" cy="27" r="14" fill="#16385c" /><path d="M9 29c0-8 7-14 13-14 3 2 2 6-1 14z" fill="#d3e2ee" /><path d="M20 29c0-5 2-8 5-9 3 2 3 5 2 9z" fill="#e8a76d" /></svg></Slot>
    <Slot w="w-[49px]"><svg width="49" height="29"><rect x="0" y="13" width="34" height="34" rx="10" fill="#4a8cff" /><path d="M7 24h13a2 2 0 0 1 2 2v6H7zM23.500 27l5-3v8z" fill="#fff" /></svg></Slot>
    <Slot w="w-[59px]" cls="bg-[#4a4a4a]"><svg width="59" height="29"><path d="M11 12h34v17H11z" fill="#fff" /><path d="M28 15v5M25.500 17.500h5M21 18v8M17 22h8M35 18v8M31 22h8M28 23v6M24 27h8M15 25v5M13 27.500h5M41 25v5M38.500 27.500h5" stroke="#3f77a8" strokeWidth="1.300" /></svg></Slot>
    <Slot w="w-[98px]"><svg width="98" height="29"><path d="M72 16c9 3 12 8 10 14H66c6-2 8-8 6-14z" fill="#fbc116" /><path d="M64 29c1-4 8-4 10 0z" fill="#c9d8e8" /></svg></Slot>
    <Slot w="w-[70px]"><span className="mt-[13px] block text-[19px] leading-[28px] font-normal tracking-[0.1px]">27°C</span></Slot>
    <Slot w="w-[236px]">
      <svg width="236" height="29" fill="none" stroke="#fff" strokeWidth="1.400">
        <path d="m3 29 6.500-6 6.500 6M34 29v-5h21v5M72 20c5-4 9-4 13-1M73 29v-5h10v5l5-4v4" /><path d="M36 26h9v3h-9z" fill="#fff" stroke="none" />
        <path d="M106 29c1-4 5-5 8-3 3-5 12-5 13 3z" fill="#a9a9a9" stroke="none" />
        <path d="M142 29v-7l22-4v11M150 29c0-4 5-5 8-3v3" /><path d="M179 29v-8h32v8" /><path d="M183 24.500h25" strokeDasharray="1.500 2" />
      </svg>
    </Slot>
    <Slot w="w-[108px]"><span className="mt-[3px] block pl-[7px] text-[18px] leading-[26px] font-normal tracking-[-0.3px] whitespace-nowrap">9:50 pm</span></Slot>
    <Slot w="w-[54px]"><svg width="54" height="29"><path d="M7 18h24v11H7z" fill="#fff" /><path d="M12 23.500h14M12 28h14" stroke="#1f1f1f" strokeWidth="1.500" /></svg></Slot>
    <div className="h-full w-px bg-[#777]" />
  </footer>
);

const ToolbarEdge = () => (
  <div className="flex h-[15px] items-start bg-[#f5f5f5]">
    <div className="h-[7px] w-[31px] bg-[#e4e4e4]" />
    <div className="ml-[11px] h-[4px] w-px bg-[#c4c4c4]" />
    <div className="ml-[269px] h-[4px] w-px bg-[#c4c4c4]" />
    <div className="ml-[184px] h-[4px] w-px bg-[#c4c4c4]" />
    <div className="ml-[162px] h-[4px] w-px bg-[#c4c4c4]" />
    <div className="ml-[130px] h-[7px] w-[45px] bg-[#e2e2e2]" />
    <div className="ml-[61px] h-[2px] w-[152px] rounded-b-[2px] border-b border-[#c4c4c4] bg-white" />
    <div className="ml-[22px] h-[4px] w-px bg-[#c4c4c4]" />
    <div className="ml-[126px] h-[4px] w-px bg-[#c4c4c4]" />
  </div>
);

export default function App() {
  return (
    <div className="flex h-[939px] w-[1893px] flex-col overflow-hidden bg-[#f4f4f4] font-['Open_Sans',sans-serif] text-[19px] leading-[27px] font-[350]">
      <ToolbarEdge />
      <main className="flex h-[819px] shrink-0">
        <DataPane />
        <CardColumn />
        <Workspace />
        <div className="ml-2 flex-1 border-t border-r border-[#d2d2d2] bg-[#fafafa]" />
      </main>
      <SheetTabs />
      <StatusBar />
      <Taskbar />
    </div>
  );
}
